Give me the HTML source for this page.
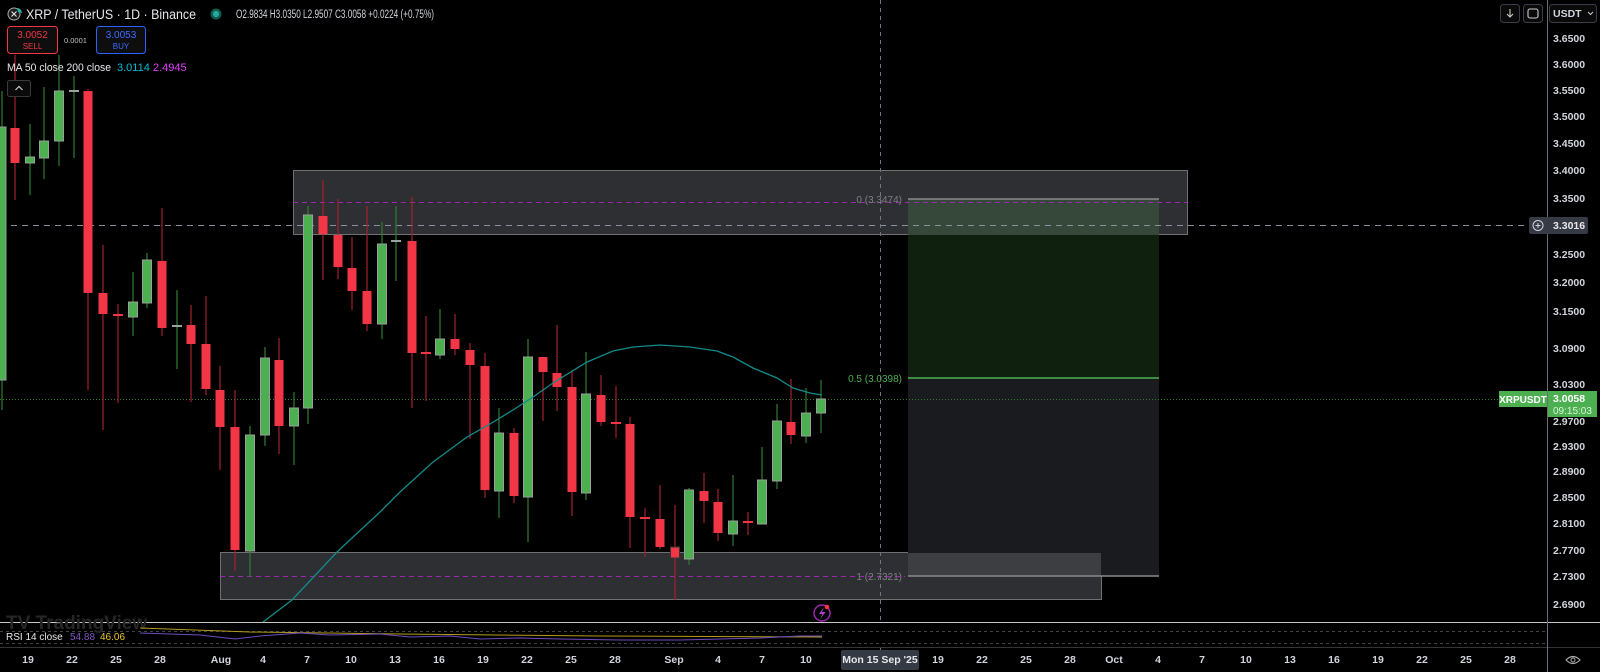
<!DOCTYPE html>
<html><head><meta charset="utf-8"><style>
html,body{margin:0;padding:0;background:#000;width:1600px;height:672px;overflow:hidden;font-family:"Liberation Sans",sans-serif;}
svg{position:absolute;left:0;top:0}
.t{font-family:"Liberation Sans",sans-serif}
</style></head><body>
<svg width="1600" height="672" viewBox="0 0 1600 672" xmlns="http://www.w3.org/2000/svg">
<rect width="1600" height="672" fill="#000"/>
<!-- zones -->
<rect x="293.5" y="170.5" width="894" height="64" fill="#2e2f32" stroke="#707070"/>
<rect x="220.5" y="552.5" width="881" height="47" fill="#2e2f32" stroke="#707070"/>
<!-- fib / position -->
<rect x="908" y="199" width="251" height="179" fill="#10200f"/>
<rect x="908" y="199" width="251" height="36" fill="#36483a"/>
<rect x="908" y="378" width="251" height="198" fill="#1a1b1e"/>
<rect x="908" y="553" width="193" height="23" fill="#3d3e42"/>
<line x1="908" y1="199" x2="1159" y2="199" stroke="#8a8a8a" stroke-width="1.5"/>
<line x1="908" y1="378" x2="1159" y2="378" stroke="#4caf50" stroke-width="1.5"/>
<line x1="908" y1="576" x2="1159" y2="576" stroke="#8a8a8a" stroke-width="1.5"/>
<line x1="293" y1="202.5" x2="1187" y2="202.5" stroke="#9c27b0" stroke-dasharray="5,4"/>
<line x1="220" y1="576.5" x2="905" y2="576.5" stroke="#9c27b0" stroke-dasharray="5,4"/>
<text x="902" y="203" text-anchor="end" font-size="10" fill="#7c7f86" class="t">0 (3.3474)</text>
<text x="902" y="382" text-anchor="end" font-size="10" fill="#4caf50" class="t">0.5 (3.0398)</text>
<text x="902" y="580" text-anchor="end" font-size="10" fill="#7c7f86" class="t">1 (2.7321)</text>
<!-- crosshair -->
<line x1="0" y1="225.5" x2="1535" y2="225.5" stroke="#8a919c" stroke-dasharray="6,5"/>
<line x1="880.5" y1="0" x2="880.5" y2="650" stroke="#6e7480" stroke-dasharray="4,4"/>
<line x1="0" y1="399.5" x2="1499" y2="399.5" stroke="#2e7d32" stroke-dasharray="1,2"/>
<!-- candles -->
<g stroke-width="1.2">
<g stroke="#2f7d33">
<line x1="2" y1="91" x2="2" y2="410"/><line x1="30" y1="124" x2="30" y2="195"/><line x1="44" y1="87" x2="44" y2="179"/><line x1="59" y1="55" x2="59" y2="166"/><line x1="74" y1="76" x2="74" y2="158"/><line x1="133" y1="272" x2="133" y2="336"/><line x1="147" y1="253" x2="147" y2="308"/><line x1="177" y1="290" x2="177" y2="369"/><line x1="250" y1="426" x2="250" y2="577"/><line x1="265" y1="347" x2="265" y2="446"/><line x1="294" y1="392" x2="294" y2="465"/><line x1="308" y1="206" x2="308" y2="424"/><line x1="382" y1="222" x2="382" y2="339"/><line x1="396" y1="206" x2="396" y2="281"/><line x1="440" y1="309" x2="440" y2="359"/><line x1="499" y1="408" x2="499" y2="518"/><line x1="528" y1="339" x2="528" y2="542"/><line x1="586" y1="352" x2="586" y2="500"/><line x1="689" y1="488" x2="689" y2="565"/><line x1="733" y1="475" x2="733" y2="546"/><line x1="762" y1="447" x2="762" y2="524"/><line x1="777" y1="404" x2="777" y2="489"/><line x1="806" y1="388" x2="806" y2="443"/><line x1="821" y1="380" x2="821" y2="433"/>
</g>
<g stroke="#a3222e">
<line x1="15" y1="55" x2="15" y2="200"/><line x1="88" y1="89" x2="88" y2="390"/><line x1="103" y1="245" x2="103" y2="430"/><line x1="118" y1="304" x2="118" y2="403"/><line x1="162" y1="208" x2="162" y2="336"/><line x1="191" y1="305" x2="191" y2="402"/><line x1="206" y1="296" x2="206" y2="395"/><line x1="220" y1="366" x2="220" y2="470"/><line x1="235" y1="390" x2="235" y2="571"/><line x1="279" y1="338" x2="279" y2="454"/><line x1="323" y1="180" x2="323" y2="280"/><line x1="338" y1="199" x2="338" y2="279"/><line x1="352" y1="237" x2="352" y2="310"/><line x1="367" y1="206" x2="367" y2="331"/><line x1="412" y1="197" x2="412" y2="408"/><line x1="426" y1="316" x2="426" y2="401"/><line x1="455" y1="314" x2="455" y2="355"/><line x1="470" y1="343" x2="470" y2="439"/><line x1="485" y1="353" x2="485" y2="498"/><line x1="514" y1="428" x2="514" y2="503"/><line x1="543" y1="357" x2="543" y2="421"/><line x1="557" y1="325" x2="557" y2="411"/><line x1="572" y1="370" x2="572" y2="516"/><line x1="601" y1="375" x2="601" y2="426"/><line x1="616" y1="386" x2="616" y2="438"/><line x1="630" y1="417" x2="630" y2="548"/><line x1="645" y1="508" x2="645" y2="557"/><line x1="660" y1="485" x2="660" y2="549"/><line x1="675" y1="505" x2="675" y2="600"/><line x1="704" y1="473" x2="704" y2="523"/><line x1="718" y1="489" x2="718" y2="541"/><line x1="748" y1="512" x2="748" y2="535"/><line x1="791" y1="379" x2="791" y2="444"/>
</g>
</g>
<g fill="#4caf50" stroke="#9a9e9e" stroke-width="1">
<rect x="-3" y="127" width="9" height="253"/><rect x="25.5" y="157" width="9" height="6"/><rect x="39.5" y="141" width="9" height="17"/><rect x="54.5" y="91" width="9" height="50"/><rect x="128.5" y="302" width="9" height="15"/><rect x="142.5" y="260" width="9" height="43"/><rect x="245.5" y="435" width="9" height="116"/><rect x="260.5" y="358" width="9" height="77"/><rect x="289.5" y="408" width="9" height="18"/><rect x="303.5" y="215" width="9" height="193"/><rect x="377.5" y="244" width="9" height="80"/><rect x="435.5" y="339" width="9" height="16"/><rect x="494.5" y="433" width="9" height="58"/><rect x="523.5" y="357" width="9" height="140"/><rect x="581.5" y="394" width="9" height="99"/><rect x="684.5" y="490" width="9" height="69"/><rect x="728.5" y="521" width="9" height="13"/><rect x="757.5" y="480" width="9" height="44"/><rect x="772.5" y="421" width="9" height="60"/><rect x="801.5" y="413" width="9" height="23"/><rect x="816.5" y="399" width="9" height="14"/>
</g>
<g fill="#9aa3a0"><rect x="69" y="90" width="10" height="2"/><rect x="172" y="325" width="10" height="2"/><rect x="391" y="240" width="10" height="2"/></g>
<g fill="#f23645">
<rect x="10.5" y="128" width="9" height="35"/><rect x="83.5" y="91" width="9" height="202"/><rect x="98.5" y="293" width="9" height="21"/><rect x="113" y="314" width="10" height="2"/><rect x="157.5" y="261" width="9" height="67"/><rect x="186.5" y="325" width="9" height="19"/><rect x="201.5" y="344" width="9" height="45"/><rect x="215.5" y="390" width="9" height="37"/><rect x="230.5" y="427" width="9" height="123"/><rect x="274.5" y="360" width="9" height="66"/><rect x="318.5" y="216" width="9" height="18"/><rect x="333.5" y="235" width="9" height="32"/><rect x="347.5" y="268" width="9" height="23"/><rect x="362.5" y="291" width="9" height="33"/><rect x="407.5" y="241" width="9" height="112"/><rect x="421" y="352" width="10" height="2"/><rect x="450.5" y="339" width="9" height="10"/><rect x="465.5" y="350" width="9" height="15"/><rect x="480.5" y="366" width="9" height="124"/><rect x="509.5" y="433" width="9" height="63"/><rect x="538.5" y="357" width="9" height="15"/><rect x="552.5" y="373" width="9" height="14"/><rect x="567.5" y="387" width="9" height="105"/><rect x="596.5" y="395" width="9" height="27"/><rect x="611" y="422" width="10" height="2"/><rect x="625.5" y="424" width="9" height="93"/><rect x="640" y="517" width="10" height="2"/><rect x="655.5" y="519" width="9" height="28"/><rect x="670.5" y="547" width="9" height="11" stroke="#333" stroke-width="1"/><rect x="699.5" y="491" width="9" height="10"/><rect x="713.5" y="502" width="9" height="31"/><rect x="743" y="521" width="10" height="2"/><rect x="786.5" y="422" width="9" height="13"/>
</g>
<!-- MA 50 -->
<polyline fill="none" stroke="#138a8a" stroke-width="1.3" points="263,622 292,600 337,552 380,512 400,492 433,462 467,437 490,424 513,410 533,397 553,383 587,362 613,351 633,347 660,345 690,347 717,351 733,357 753,368 777,378 793,388 810,393 822,395"/>
<!-- flash icon -->
<circle cx="822" cy="613" r="8" fill="none" stroke="#9c27b0" stroke-width="1.5"/>
<path d="M824 607 L819 614 L822.5 614 L820 619.5 L825.5 612 L822 612 Z" fill="#b040d0"/>
<circle cx="827" cy="607" r="2.3" fill="#f23645"/>
<!-- header -->
<circle cx="14" cy="14" r="6" fill="#1c1c1c" stroke="#aaa" stroke-width="1"/>
<path d="M11.5 11.5 L16.5 16.5 M16.5 11.5 L11.5 16.5" stroke="#ddd" stroke-width="1.2"/>
<path d="M17 8 A5 5 0 0 1 22 13 L18 12 Z" fill="#2ab0a0"/>
<text x="26" y="19" font-size="13.5" fill="#e6e7ea" class="t" textLength="170" lengthAdjust="spacingAndGlyphs">XRP / TetherUS · 1D · Binance</text>
<circle cx="216" cy="14" r="5.5" fill="#0f5a4a"/><circle cx="216" cy="14" r="3.2" fill="#26a69a"/>
<text x="236" y="18" font-size="11.5" fill="#d1d4dc" class="t" textLength="198" lengthAdjust="spacingAndGlyphs">O2.9834 H3.0350 L2.9507 C3.0058 +0.0224 (+0.75%)</text>
<rect x="7.5" y="26.5" width="50" height="27" rx="3" fill="#0e0e0e" stroke="#f23645"/>
<text x="32.5" y="38" text-anchor="middle" font-size="10" fill="#f23645" class="t">3.0052</text>
<text x="32.5" y="49" text-anchor="middle" font-size="8" fill="#f23645" class="t">SELL</text>
<text x="64" y="43" font-size="7.5" fill="#c0c0c0" class="t">0.0001</text>
<rect x="96.5" y="26.5" width="49" height="27" rx="3" fill="#0e0e0e" stroke="#2962ff"/>
<text x="121" y="38" text-anchor="middle" font-size="10" fill="#3d6bff" class="t">3.0053</text>
<text x="121" y="49" text-anchor="middle" font-size="8" fill="#3d6bff" class="t">BUY</text>
<text x="7" y="71" font-size="11" fill="#e6e7ea" class="t" textLength="104" lengthAdjust="spacingAndGlyphs">MA 50 close 200 close</text>
<text x="117" y="71" font-size="11" fill="#00bcd4" class="t">3.0114</text>
<text x="153" y="71" font-size="11" fill="#e040fb" class="t">2.4945</text>
<rect x="7.5" y="80.5" width="23" height="16" rx="2" fill="#0a0a0a" stroke="#3a3a3a"/>
<path d="M15.5 90 L19 86.5 L22.5 90" fill="none" stroke="#ccc" stroke-width="1.2"/>
<!-- RSI pane -->
<rect x="0" y="623" width="1547" height="24" fill="#000"/>
<line x1="0" y1="622.5" x2="1600" y2="622.5" stroke="#c8c8c8"/>
<line x1="0" y1="631.5" x2="1547" y2="631.5" stroke="#444" stroke-dasharray="3,3"/>
<line x1="0" y1="643.5" x2="1547" y2="643.5" stroke="#444" stroke-dasharray="3,3"/>
<line x1="0" y1="647.5" x2="1600" y2="647.5" stroke="#333"/>
<text x="6" y="629" font-size="19" fill="#262626" class="t" font-weight="bold">TV TradingView</text>
<polyline fill="none" stroke="#b59a1e" stroke-width="1" points="140,628 250,632 400,634 600,636 822,637"/>
<polyline fill="none" stroke="#6a4cc0" stroke-width="1" points="140,633 200,635 235,639 260,636 300,633 330,635 380,634 410,637 450,636 480,639 520,638 560,639 620,640 680,640 760,638 800,636 822,636"/>
<text x="6" y="640" font-size="10" fill="#e6e7ea" class="t">RSI 14 close</text>
<text x="70" y="640" font-size="10" fill="#7e57c2" class="t">54.88</text>
<text x="100" y="640" font-size="10" fill="#e6c229" class="t">46.06</text>
<!-- price axis -->
<line x1="1547.5" y1="0" x2="1547.5" y2="672" stroke="#6a6d75"/>
<g font-size="10.5" fill="#d1d4dc" class="t" font-weight="bold">
<text x="1553" y="42">3.6500</text><text x="1553" y="68">3.6000</text><text x="1553" y="94">3.5500</text><text x="1553" y="120">3.5000</text><text x="1553" y="147">3.4500</text><text x="1553" y="174">3.4000</text><text x="1553" y="202">3.3500</text><text x="1553" y="258">3.2500</text><text x="1553" y="286">3.2000</text><text x="1553" y="315">3.1500</text><text x="1553" y="352">3.0900</text><text x="1553" y="388">3.0300</text><text x="1553" y="425">2.9700</text><text x="1553" y="450">2.9300</text><text x="1553" y="475">2.8900</text><text x="1553" y="501">2.8500</text><text x="1553" y="527">2.8100</text><text x="1553" y="554">2.7700</text><text x="1553" y="580">2.7300</text><text x="1553" y="608">2.6900</text>
</g>
<rect x="1529" y="217" width="59" height="17" rx="2" fill="#363a45"/>
<circle cx="1538" cy="225.5" r="5" fill="none" stroke="#d1d4dc" stroke-width="1"/>
<path d="M1535.5 225.5 H1540.5 M1538 223 V228" stroke="#d1d4dc" stroke-width="1"/>
<text x="1553" y="229" font-size="10.5" fill="#e6e7ea" class="t" font-weight="bold">3.3016</text>
<rect x="1499" y="391" width="48" height="16" fill="#4caf50"/>
<text x="1523" y="403" text-anchor="middle" font-size="10" fill="#fff" class="t" font-weight="bold">XRPUSDT</text>
<rect x="1548" y="391" width="49" height="26" fill="#4caf50"/>
<text x="1553" y="402" font-size="10.5" fill="#fff" class="t" font-weight="bold">3.0058</text>
<text x="1553" y="414" font-size="10" fill="#d9f5da" class="t">09:15:03</text>
<rect x="1500.5" y="4.5" width="19" height="18" rx="3" fill="#0a0a0a" stroke="#3a3d45"/>
<path d="M1510 9 V17 M1507 14 L1510 17 L1513 14" fill="none" stroke="#ccc" stroke-width="1.1"/>
<rect x="1523.5" y="4.5" width="19" height="18" rx="3" fill="#0a0a0a" stroke="#3a3d45"/>
<rect x="1528" y="9" width="10" height="9" rx="2" fill="none" stroke="#ccc" stroke-width="1.1"/>
<rect x="1549.5" y="4.5" width="47" height="18" rx="3" fill="#0a0a0a" stroke="#3a3d45"/>
<text x="1553" y="17" font-size="10.5" fill="#d1d4dc" class="t" font-weight="bold">USDT</text>
<path d="M1588 12 L1590.5 14.5 L1593 12" fill="none" stroke="#ccc" stroke-width="1"/>
<!-- eye icon -->
<path d="M1566 660 Q1573 653 1580 660 Q1573 667 1566 660 Z" fill="none" stroke="#aaa" stroke-width="1.1"/>
<circle cx="1573" cy="660" r="2" fill="none" stroke="#aaa"/>
<!-- time axis -->
<g font-size="10.5" fill="#d1d4dc" class="t" text-anchor="middle" font-weight="bold">
<text x="28" y="663">19</text><text x="72" y="663">22</text><text x="116" y="663">25</text><text x="160" y="663">28</text><text x="221" y="663">Aug</text><text x="263" y="663">4</text><text x="307" y="663">7</text><text x="351" y="663">10</text><text x="395" y="663">13</text><text x="439" y="663">16</text><text x="483" y="663">19</text><text x="527" y="663">22</text><text x="571" y="663">25</text><text x="615" y="663">28</text><text x="674" y="663">Sep</text><text x="718" y="663">4</text><text x="762" y="663">7</text><text x="806" y="663">10</text><text x="938" y="663">19</text><text x="982" y="663">22</text><text x="1026" y="663">25</text><text x="1070" y="663">28</text><text x="1114" y="663">Oct</text><text x="1158" y="663">4</text><text x="1202" y="663">7</text><text x="1246" y="663">10</text><text x="1290" y="663">13</text><text x="1334" y="663">16</text><text x="1378" y="663">19</text><text x="1422" y="663">22</text><text x="1466" y="663">25</text><text x="1510" y="663">28</text>
</g>
<rect x="841" y="650" width="78" height="20" rx="2" fill="#363a45"/>
<text x="880" y="663" text-anchor="middle" font-size="10.5" fill="#e6e7ea" class="t" font-weight="bold">Mon 15 Sep '25</text>
</svg>
</body></html>
